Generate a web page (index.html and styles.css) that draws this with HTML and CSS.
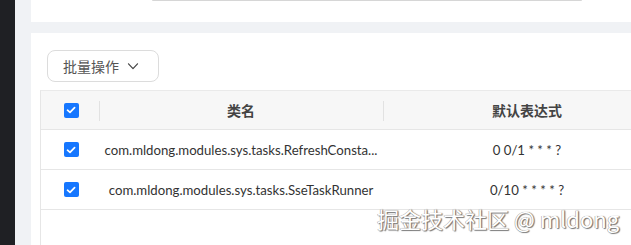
FILE: index.html
```html
<!DOCTYPE html>
<html lang="zh">
<head>
<meta charset="utf-8">
<link rel="stylesheet" href="styles.css">
</head>
<body>
<div class="app">
  <aside class="sidebar"></aside>
  <main class="main">
    <section class="card card-top">
      <div class="input-edge"></div>
    </section>
    <section class="card card-table">
      <div class="toolbar">
        <button class="btn">批量操作
          <svg class="chev" width="12" height="12" viewBox="0 0 12 12"><path d="M1.5 3.8 L6 8.6 L10.5 3.8" fill="none" stroke="#444" stroke-width="1.2" stroke-linecap="round" stroke-linejoin="round"/></svg>
        </button>
      </div>
      <div class="table">
        <div class="row head">
          <div class="cell c-check"><span class="cb"><svg width="10" height="8" viewBox="0 0 10 8"><path d="M1.5 4.2 L4 6.4 L8.6 1.6" fill="none" stroke="#fff" stroke-width="1.7" stroke-linecap="round" stroke-linejoin="round"/></svg></span></div>
          <div class="cell c-name sep">类名</div>
          <div class="cell c-expr sep">默认表达式</div>
        </div>
        <div class="row">
          <div class="cell c-check"><span class="cb"><svg width="10" height="8" viewBox="0 0 10 8"><path d="M1.5 4.2 L4 6.4 L8.6 1.6" fill="none" stroke="#fff" stroke-width="1.7" stroke-linecap="round" stroke-linejoin="round"/></svg></span></div>
          <div class="cell c-name">com.mldong.modules.sys.tasks.RefreshConsta...</div>
          <div class="cell c-expr">0 0/1 * * * ?</div>
        </div>
        <div class="row">
          <div class="cell c-check"><span class="cb"><svg width="10" height="8" viewBox="0 0 10 8"><path d="M1.5 4.2 L4 6.4 L8.6 1.6" fill="none" stroke="#fff" stroke-width="1.7" stroke-linecap="round" stroke-linejoin="round"/></svg></span></div>
          <div class="cell c-name">com.mldong.modules.sys.tasks.SseTaskRunner</div>
          <div class="cell c-expr">0/10 * * * * ?</div>
        </div>
      </div>
    </section>
  </main>
</div>
<div class="watermark">掘金技术社区 @ mldong</div>
</body>
</html>
```
FILE: styles.css
```css
html, body {
  margin: 0;
  padding: 0;
  width: 631px;
  height: 245px;
  overflow: hidden;
  background: #f0f2f5;
  font-family: "Lato", "Noto Sans CJK SC", sans-serif;
  color: #333;
}
.app {
  display: flex;
  height: 245px;
  overflow: hidden;
}
.sidebar {
  width: 15px;
  flex: none;
  background: #1f2024;
}
.main {
  flex: 1;
  min-width: 0;
  padding-left: 16px;
  display: flex;
  flex-direction: column;
  gap: 11px;
  overflow: hidden;
}
.card {
  background: #fff;
  width: 600px;
  flex: none;
}
.card-top {
  height: 22px;
}
.input-edge {
  margin-left: 121px;
  width: 430px;
  height: 1px;
  background: #d6d6d6;
  border-radius: 0 0 2px 2px;
}
.card-table {
  flex: 1;
  padding: 17px 0 0 9px;
  display: flex;
  flex-direction: column;
}
.toolbar {
  padding-left: 7px;
  margin-bottom: 8px;
}
.btn {
  box-sizing: border-box;
  width: 112px;
  height: 32px;
  border: 1px solid #dcdcdc;
  border-radius: 8px;
  background: #fff;
  font-family: "Noto Sans CJK SC", sans-serif;
  font-size: 14px;
  color: #555;
  display: flex;
  align-items: center;
  gap: 8px;
  padding: 0 0 0 15px;
}
.chev { display: block; }
.table {
  flex: 1;
  border-left: 1px solid #e6e6e6;
  border-top: 1px solid #eaeaea;
}
.row {
  display: flex;
  height: 39px;
  border-bottom: 1px solid #e6e6e6;
  font-size: 13.2px;
}
.row.head {
  height: 38px;
  background: #f7f7f7;
  font-family: "Noto Sans CJK SC", sans-serif;
  font-weight: 600;
  font-size: 14px;
  color: #444;
}
.cell {
  display: flex;
  align-items: center;
  justify-content: center;
  position: relative;
  white-space: nowrap;
}
.c-check { width: 58px; flex: none; }
.c-name { width: 284px; flex: none; }
.c-expr { width: 288px; flex: none; }
.sep::before {
  content: "";
  position: absolute;
  left: 0;
  top: 10px;
  height: 20px;
  width: 1px;
  background: #e2e2e2;
}
.cb {
  width: 15px;
  height: 15px;
  border-radius: 2px;
  background: #1677ff;
  display: flex;
  align-items: center;
  justify-content: center;
  margin-left: 2px;
}
.cb svg { display: block; }
.watermark {
  position: absolute;
  left: 377px;
  top: 202px;
  font-family: "Noto Sans CJK SC", sans-serif;
  font-size: 22px;
  color: #fff;
  text-shadow: 1px 1px 1px #777, -0.5px -0.5px 0.5px #999, 1px 0 1px #888;
  white-space: nowrap;
}
```
